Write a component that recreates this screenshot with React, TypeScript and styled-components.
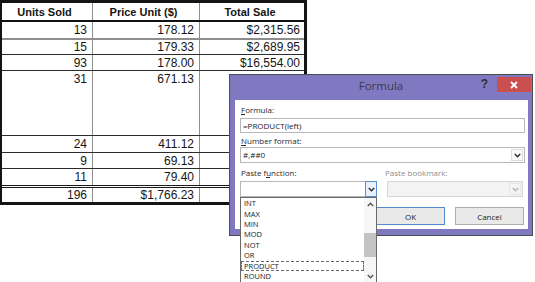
import React from "react";
import styled, { createGlobalStyle } from "styled-components";

const Global = createGlobalStyle`
  html, body { margin: 0; padding: 0; background: #fff; }
  body { width: 535px; height: 282px; overflow: hidden; }
`;

const Page = styled.div`
  position: relative;
  width: 535px;
  height: 282px;
  overflow: hidden;
  background: #fff;
`;

/* ---------- Spreadsheet table ---------- */

const Sheet = styled.div`
  width: 307px;
  box-sizing: border-box;
  border: 3px solid #141414;
  border-left-width: 2px;
  font-family: "Liberation Sans", Arial, sans-serif;
  color: #151515;
  background: #fff;
`;

type Line = "thin" | "gray" | "thick" | "double";
const lines: Record<Line, string> = {
  thin: "1px solid #2c2c2c",
  gray: "2px solid #8d8d8d",
  thick: "2px solid #111",
  double: "3px double #1a1a1a",
};

const Row = styled.div<{ $h: number; $line?: Line }>`
  display: grid;
  grid-template-columns: 91px 107px 104px;
  height: ${(p) => p.$h}px;
  border-bottom: ${(p) => (p.$line ? lines[p.$line] : "none")};
`;

const Cell = styled.div<{ $head?: boolean; $top?: boolean }>`
  display: flex;
  align-items: ${(p) => (p.$top ? "flex-start" : "center")};
  justify-content: ${(p) => (p.$head ? "center" : "flex-end")};
  padding: ${(p) => (p.$top ? "1px 5px 0 0" : "0 5px 0 0")};
  border-right: 1px solid #8f8f8f;
  font-size: ${(p) => (p.$head ? "11px" : "12px")};
  font-weight: ${(p) => (p.$head ? 700 : 400)};
  line-height: 14px;
  white-space: nowrap;
  overflow: hidden;
  &:last-child {
    border-right: none;
    padding-right: 4px;
  }
`;

/* the Total Sale cells of the lower rows lie under the dialog and show nothing */
const rows: { h: number; line?: Line; top?: boolean; v: string[] }[] = [
  { h: 16, line: "gray", v: ["13", "178.12", "$2,315.56"] },
  { h: 14, line: "thin", v: ["15", "179.33", "$2,689.95"] },
  { h: 15, line: "thin", v: ["93", "178.00", "$16,554.00"] },
  { h: 64, line: "thin", top: true, v: ["31", "671.13", ""] },
  { h: 16, line: "thin", v: ["24", "411.12", ""] },
  { h: 15, line: "thin", v: ["9", "69.13", ""] },
  { h: 16, line: "double", v: ["11", "79.40", ""] },
  { h: 14, v: ["196", "$1,766.23", ""] },
];

/* ---------- Formula dialog ---------- */

const Dialog = styled.div`
  position: absolute;
  left: 229px;
  top: 74px;
  width: 304px;
  height: 162px;
  box-sizing: border-box;
  border: 1px solid #4b4b52;
  background: #8079c1;
  display: flex;
  flex-direction: column;
  font-family: "Open Sans", "Noto Sans", sans-serif;
  color: #1e1e1e;
`;

const TitleBar = styled.div`
  height: 25px;
  display: grid;
  grid-template-columns: 1fr auto 1fr;
  align-items: start;
`;

const Title = styled.div`
  grid-column: 2;
  margin-top: 3px;
  font-size: 11.5px;
  line-height: 15px;
  color: #3b3b4a;
`;

const TitleControls = styled.div`
  grid-column: 3;
  justify-self: end;
  display: flex;
  align-items: center;
  gap: 9px;
  margin-top: 2px;
  padding-right: 1px;
`;

const Help = styled.span`
  font-family: "Liberation Sans", Arial, sans-serif;
  font-size: 12px;
  font-weight: 700;
  color: #2e2e3a;
  line-height: 15px;
`;

const Close = styled.div`
  width: 34px;
  height: 15px;
  background: #c9504f;
  display: flex;
  align-items: center;
  justify-content: center;
`;

const Panel = styled.div`
  margin: 0 4px 0 5px;
  height: 129px;
  box-sizing: border-box;
  background: #fff;
  padding: 4px 3px 0 5px;
  display: flex;
  flex-direction: column;
`;

/* access-key underline is drawn as a decoration under one letter */
const Label = styled.div<{
  $gap?: number;
  $disabled?: boolean;
  $shift?: number;
  $ul?: [number, number];
}>`
  position: relative;
  height: 11px;
  line-height: 11px;
  font-size: 8px;
  margin-top: ${(p) => p.$gap ?? 0}px;
  margin-left: ${(p) => p.$shift ?? 1}px;
  color: ${(p) => (p.$disabled ? "#8d8d8d" : "#1f1f1f")};
  white-space: nowrap;
  &::after {
    content: "";
    display: ${(p) => (p.$ul ? "block" : "none")};
    position: absolute;
    left: ${(p) => (p.$ul ? p.$ul[0] : 0)}px;
    width: ${(p) => (p.$ul ? p.$ul[1] : 0)}px;
    top: 10px;
    height: 1px;
    background: #2a2a2a;
  }
`;

const TextBox = styled.div<{ $gap: number; $h: number; $disabled?: boolean }>`
  margin-top: ${(p) => p.$gap}px;
  height: ${(p) => p.$h}px;
  box-sizing: border-box;
  border: 1px solid ${(p) => (p.$disabled ? "#d6d6d6" : "#b8b8b8")};
  background: ${(p) => (p.$disabled ? "#f3f3f3" : "#fff")};
  display: flex;
  align-items: stretch;
  font-size: 8px;
  line-height: 10px;
  color: #1b1b1b;
`;

const BoxText = styled.div`
  flex: 1;
  display: flex;
  align-items: center;
  padding-left: 2px;
  white-space: nowrap;
`;

const DropButton = styled.div<{ $active?: boolean; $disabled?: boolean }>`
  width: 12px;
  margin: ${(p) => (p.$active ? "-1px -1px -1px 0" : "1px")};
  box-sizing: border-box;
  border: 1px solid ${(p) => (p.$active ? "#5a8fd0" : p.$disabled ? "#e6e6e6" : "#dcdcdc")};
  background: ${(p) => (p.$active ? "#e8f1fb" : p.$disabled ? "#f3f3f3" : "#fbfbfb")};
  display: flex;
  align-items: center;
  justify-content: center;
`;

const PairGrid = styled.div<{ $gap?: number }>`
  display: grid;
  grid-template-columns: 137px 136px;
  column-gap: 10px;
  margin-top: ${(p) => p.$gap ?? 0}px;
`;

const ButtonRow = styled.div`
  margin-top: 10px;
  display: flex;
  justify-content: flex-end;
  gap: 10px;
  padding-right: 1px;
`;

const Button = styled.div<{ $default?: boolean }>`
  width: 69px;
  height: 18px;
  box-sizing: border-box;
  border: 1px solid ${(p) => (p.$default ? "#4f8cd0" : "#adadad")};
  background: #e9e9e9;
  font-size: 8px;
  display: flex;
  align-items: center;
  justify-content: center;
  color: #1e1e1e;
`;

const List = styled.div`
  position: absolute;
  left: 10px;
  top: 122px;
  width: 137px;
  height: 86px;
  box-sizing: border-box;
  border: 1px solid #6a6a6a;
  background: #fff;
  display: grid;
  grid-template-columns: 1fr 12px;
`;

const Items = styled.div`
  display: flex;
  flex-direction: column;
`;

const Item = styled.div<{ $focus?: boolean }>`
  height: 10.43px;
  box-sizing: border-box;
  line-height: 8px;
  font-size: 7.5px;
  padding-left: 2px;
  color: #202020;
  border: 1px ${(p) => (p.$focus ? "dashed #6a6a6a" : "solid transparent")};
  display: flex;
  align-items: center;
  white-space: nowrap;
`;

const ScrollBar = styled.div`
  background: #f6f6f6;
  display: flex;
  flex-direction: column;
  align-items: stretch;
`;

const ScrollArrow = styled.div`
  height: 12px;
  display: flex;
  align-items: center;
  justify-content: center;
`;

const Thumb = styled.div`
  margin: 23px 0 0 0;
  height: 24px;
  background: #c3c3c3;
`;

const Spacer = styled.div`
  flex: 1;
`;

const Chevron = ({ up, color = "#2b2b2b" }: { up?: boolean; color?: string }) => (
  <svg width="7" height="5" viewBox="0 0 7 5">
    <polyline
      points={up ? "0.8,4 3.5,1.2 6.2,4" : "0.8,1 3.5,3.8 6.2,1"}
      fill="none"
      stroke={color}
      strokeWidth="1.4"
    />
  </svg>
);

const CloseX = () => (
  <svg width="8" height="8" viewBox="0 0 8 8">
    <path d="M1 1 L7 7 M7 1 L1 7" stroke="#fff" strokeWidth="1.8" />
  </svg>
);

const functions = ["INT", "MAX", "MIN", "MOD", "NOT", "OR", "PRODUCT", "ROUND"];

export default function App() {
  return (
    <Page>
      <Global />
      <Sheet>
        <Row $h={17} $line="thick">
          <Cell $head>Units Sold</Cell>
          <Cell $head>Price Unit ($)</Cell>
          <Cell $head>Total Sale</Cell>
        </Row>
        {rows.map((r, i) => (
          <Row key={i} $h={r.h} $line={r.line}>
            {r.v.map((t, j) => (
              <Cell key={j} $top={r.top}>
                {t}
              </Cell>
            ))}
          </Row>
        ))}
      </Sheet>

      <Dialog>
        <TitleBar>
          <Title>Formula</Title>
          <TitleControls>
            <Help>?</Help>
            <Close>
              <CloseX />
            </Close>
          </TitleControls>
        </TitleBar>
        <Panel>
          <Label $ul={[0, 4]}>Formula:</Label>
          <TextBox $gap={3} $h={15}>
            <BoxText>=PRODUCT(left)</BoxText>
          </TextBox>
          <Label $gap={2} $ul={[0, 5]}>
            Number format:
          </Label>
          <TextBox $gap={1} $h={16}>
            <BoxText>#,##0</BoxText>
            <DropButton>
              <Chevron />
            </DropButton>
          </TextBox>
          <PairGrid $gap={4}>
            <Label $ul={[25, 4]}>Paste function:</Label>
            <Label $disabled $shift={-2}>
              Paste bookmark:
            </Label>
          </PairGrid>
          <PairGrid $gap={3}>
            <TextBox $gap={0} $h={16}>
              <BoxText />
              <DropButton $active>
                <Chevron />
              </DropButton>
            </TextBox>
            <TextBox $gap={0} $h={16} $disabled>
              <BoxText />
              <DropButton $disabled>
                <Chevron color="#b5b5b5" />
              </DropButton>
            </TextBox>
          </PairGrid>
          <ButtonRow>
            <Button $default>OK</Button>
            <Button>Cancel</Button>
          </ButtonRow>
        </Panel>

        <List>
          <Items>
            {functions.map((f) => (
              <Item key={f} $focus={f === "PRODUCT"}>
                {f}
              </Item>
            ))}
          </Items>
          <ScrollBar>
            <ScrollArrow>
              <Chevron up color="#555" />
            </ScrollArrow>
            <Thumb />
            <Spacer />
            <ScrollArrow>
              <Chevron color="#555" />
            </ScrollArrow>
          </ScrollBar>
        </List>
      </Dialog>
    </Page>
  );
}
